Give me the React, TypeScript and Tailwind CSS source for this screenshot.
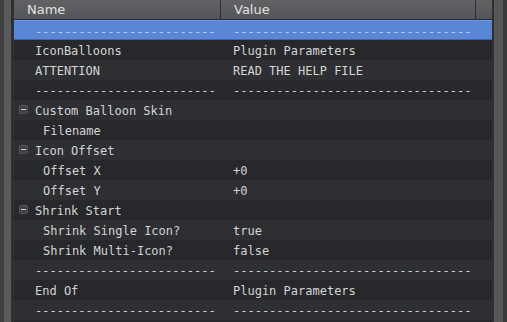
import React from "react";

type Row = { name: string; value: string; level: 0 | 1 | 2; group?: boolean };

const D1 = "-------------------------";
const D2 = "---------------------------------";

const rows: Row[] = [
  { name: D1, value: D2, level: 1 },
  { name: "IconBalloons", value: "Plugin Parameters", level: 1 },
  { name: "ATTENTION", value: "READ THE HELP FILE", level: 1 },
  { name: D1, value: D2, level: 1 },
  { name: "Custom Balloon Skin", value: "", level: 1, group: true },
  { name: "Filename", value: "", level: 2 },
  { name: "Icon Offset", value: "", level: 1, group: true },
  { name: "Offset X", value: "+0", level: 2 },
  { name: "Offset Y", value: "+0", level: 2 },
  { name: "Shrink Start", value: "", level: 1, group: true },
  { name: "Shrink Single Icon?", value: "true", level: 2 },
  { name: "Shrink Multi-Icon?", value: "false", level: 2 },
  { name: D1, value: D2, level: 1 },
  { name: "End Of", value: "Plugin Parameters", level: 1 },
  { name: D1, value: D2, level: 1 },
];

const mono = { fontFamily: '"DejaVu Sans Mono", monospace' };

function MinusBox() {
  return (
    <div className="absolute left-[5px] top-[5px] w-[9px] h-[9px] rounded-[2px] bg-[#3f4145] border border-[#55575b] flex items-center justify-center">
      <div className="w-[5px] h-[1px] bg-[#d0d0d0]" />
    </div>
  );
}

export default function App() {
  return (
    <div className="flex w-[507px] h-[322px] bg-[#2a2c2f] overflow-hidden">
      <div className="w-[4px] bg-[#3e3e3e]" />
      <div className="w-[7px] bg-[#5a5a5a]" />
      <div className="w-[3px] bg-[#303030]" />
      <div className="flex flex-col w-[478px]">
        <div
          className="flex h-[20px] bg-gradient-to-b from-[#606264] to-[#54565a] border-b border-[#2a2a2a] text-[#e2e2e2] text-[13px]"
          style={{ fontFamily: '"DejaVu Sans", sans-serif' }}
        >
          <div className="w-[207px] pl-[13px] leading-[19px] border-r border-[#2c2c2c]">Name</div>
          <div className="w-[255px] pl-[13px] leading-[19px] border-r border-[#2c2c2c]">Value</div>
          <div className="flex-1" />
        </div>
        {rows.map((r, i) => {
          const sel = i === 0;
          const bg = sel
            ? "bg-[#5a86d7] border-t border-[#7099e2] border-b border-b-[#3e63a8]"
            : i % 2 === 1
            ? "bg-[#26282b]"
            : "bg-[#2d2f32]";
          const color = sel ? "text-[#b8cdf2]" : "text-[#d4d4d4]";
          const pl = r.level === 2 ? "pl-[29px]" : "pl-[21px]";
          return (
            <div
              key={i}
              className={`relative flex h-[20px] pt-[4px] leading-[14px] text-[12px] ${bg} ${color}`}
              style={mono}
            >
              {r.group && <MinusBox />}
              <div className={`w-[208px] ${pl} whitespace-pre`}>{r.name}</div>
              <div className="pl-[11px] whitespace-pre">{r.value}</div>
            </div>
          );
        })}
        <div className="flex-1 bg-[#26282b]" />
      </div>
      <div className="w-[2px] bg-[#303030]" />
      <div className="w-[9px] bg-[#555759]" />
      <div className="flex-1 bg-[#3a3a3a]" />
    </div>
  );
}
